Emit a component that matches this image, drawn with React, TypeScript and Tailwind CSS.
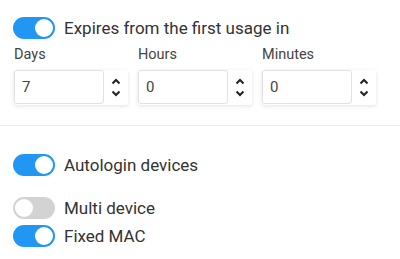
import React from 'react';

const Toggle = ({ on }: { on: boolean }) => (
  <div
    className={`relative w-[42px] h-[22px] rounded-full shrink-0 ${on ? 'bg-[#2196f3]' : 'bg-[#d3d3d3]'}`}
  >
    <div
      className={`absolute top-[2px] w-[18px] h-[18px] rounded-full bg-white ${on ? 'left-[22px]' : 'left-[2px]'}`}
    ></div>
  </div>
);

const ToggleRow = ({ on, label }: { on: boolean; label: string }) => (
  <div className="flex items-center gap-[9px] h-[22px]">
    <Toggle on={on} />
    <span className="text-[17px] text-[#333] leading-none">{label}</span>
  </div>
);

const Spinner = () => (
  <div className="flex flex-col items-center justify-center w-[24px] gap-[5px]">
    <svg width="10" height="7" viewBox="0 0 10 7">
      <path d="M1.5 5.5 L5 2 L8.5 5.5" fill="none" stroke="#222" strokeWidth="2" />
    </svg>
    <svg width="10" height="7" viewBox="0 0 10 7">
      <path d="M1.5 1.5 L5 5 L8.5 1.5" fill="none" stroke="#222" strokeWidth="2" />
    </svg>
  </div>
);

const NumberField = ({ label, value }: { label: string; value: string }) => (
  <div className="flex flex-col w-[114px]">
    <span className="text-[14.5px] text-[#444] leading-[16px] h-[16px]">{label}</span>
    <div className="mt-[7px] flex h-[35px] rounded-[3px] shadow-[0_1px_4px_rgba(0,0,0,0.12)]">
      <div className="w-[90px] h-[34px] border border-[#e2e2e2] rounded-[3px] flex items-center px-[7px] text-[15px] text-[#444]">
        {value}
      </div>
      <Spinner />
    </div>
  </div>
);

export default function App() {
  return (
    <div className="w-[400px] h-[259px] bg-white font-['Roboto',sans-serif] overflow-hidden">
      <div className="px-[13px] pt-[17px]">
        <ToggleRow on={true} label="Expires from the first usage in" />
        <div className="flex gap-[10px] mt-[8px] pl-[1px]">
          <NumberField label="Days" value="7" />
          <NumberField label="Hours" value="0" />
          <NumberField label="Minutes" value="0" />
        </div>
      </div>
      <div className="mt-[20px] h-px bg-[#ececec]"></div>
      <div className="px-[13px] pt-[28px] flex flex-col">
        <ToggleRow on={true} label="Autologin devices" />
        <div className="mt-[21px] flex flex-col gap-[6px]">
          <ToggleRow on={false} label="Multi device" />
          <ToggleRow on={true} label="Fixed MAC" />
        </div>
      </div>
    </div>
  );
}
